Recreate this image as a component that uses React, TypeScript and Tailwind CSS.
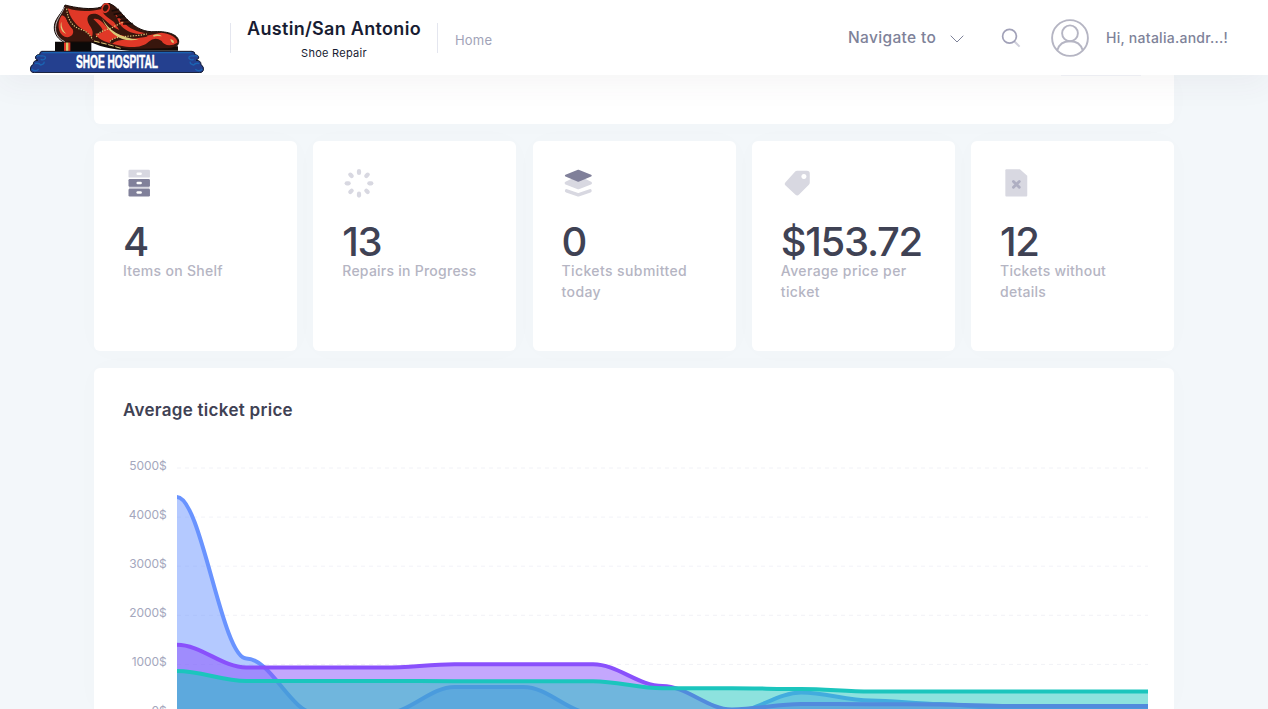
import React from 'react';

const Cabinet = () => (
  <svg viewBox="0 0 24 24" className="size-9">
    <rect x="5" y="3.2" width="14.3" height="5.2" rx="0.8" fill="#d8d8e1" />
    <rect x="5.4" y="13" width="13.6" height="3.5" fill="#d8d8e1" />
    <rect x="5" y="9.4" width="14.3" height="5.1" rx="0.8" fill="#80809a" />
    <rect x="5" y="15.8" width="14.3" height="5.2" rx="0.8" fill="#80809a" />
    {[5, 11.2, 17.5].map((y) => (
      <rect key={y} x="10.3" y={y} width="3.6" height="1.6" rx="0.8" fill="#fff" />
    ))}
  </svg>
);

const Loading = () => (
  <svg viewBox="0 0 24 24" className="ml-px size-9" fill="#d8d8e1">
    {[0, 45, 90, 135, 180, 225, 270, 315].map((a) => (
      <rect key={a} x="10.6" y="2.6" width="2.8" height="4.1" rx="1.4" transform={`rotate(${a} 12 12.2)`} />
    ))}
  </svg>
);

const Layers = () => (
  <svg viewBox="0 0 24 24" className="size-9">
    <g fill="#d8d8e1" stroke="#d8d8e1" strokeLinejoin="round" strokeLinecap="round">
      <path d="M4.1 12 12.2 15.2 20.3 12 12.2 8z" strokeWidth="2" />
      <path d="M4.4 17.2 12.2 19.9 20 17.2" fill="none" strokeWidth="2.3" />
    </g>
    <path d="M3.9 7.1 12.2 3.8 20.5 7.1 12.2 10.5z" fill="#80809a" stroke="#80809a" strokeWidth="1.3" strokeLinejoin="round" />
  </svg>
);

const Tag = () => (
  <svg viewBox="0 0 24 24" className="size-9">
    <path
      fillRule="evenodd"
      fill="#d8d8e1"
      d="M12 3.8H18.6Q20.5 3.8 20.5 5.6V11.8Q20.5 12.6 19.9 13.2L13.4 19.7Q12.2 20.9 11 19.8L4.2 13.5Q3.3 12.6 4.2 11.6L10.8 4.4Q11.3 3.8 12 3.8zM16.6 6a1.7 1.7 0 1 0 .01 0z"
    />
  </svg>
);

const FileX = () => (
  <svg viewBox="0 0 24 24" className="size-9">
    <path d="M5.5 2.9H14.6L19.5 7.1V20.4Q19.5 21 18.9 21H5.5Q4.9 21 4.9 20.4V3.5Q4.9 2.9 5.5 2.9z" fill="#d8d8e1" />
    <path d="M10.3 11 14.2 14.9M14.2 11 10.3 14.9" stroke="#afafc2" strokeWidth="1.9" strokeLinecap="round" />
  </svg>
);

const Logo = () => (
  <svg viewBox="30 8 522 210" className="h-[70px] w-[174px]">
    <path d="M105 124H214V153H105z" fill="#0c0a09" />
    <path d="M132 124H151V153H132z" fill="#df3526" />
    <path d="M138 124H145V153H138z" fill="#d9c56b" />
    <path d="M212 120 300 138 474 138V151H330Q260 148 212 126z" fill="#120c08" />
    <path
      d="M135 14C165 22 215 30 244 20C250 6 266 6 273 12C290 18 305 42 326 62C350 84 374 96 405 94C445 92 478 104 476 126Q474 144 442 145L330 147C286 145 250 128 214 125H132C100 110 98 78 109 58C119 40 130 32 135 14Z"
      fill="#38160d"
      stroke="#160b07"
      strokeWidth="3"
    />
    <path d="M133 20C124 46 103 60 107 92Q111 113 134 124" fill="none" stroke="#b9b9bd" strokeWidth="3" />
    <path d="M126 45C142 48 140 70 158 87C166 107 142 118 127 105C111 90 113 59 126 45Z" fill="#e03827" />
    <path d="M143 24C172 35 214 34 246 26C246 43 266 53 282 65L298 89C270 80 254 52 232 42C207 36 194 50 208 74C222 92 219 106 213 112C194 85 157 79 143 24Z" fill="#e03827" />
    <path d="M220 56C246 49 255 86 286 99C307 110 340 111 376 107L424 97C451 100 474 112 472 127C454 139 431 136 425 122Q405 108 386 124C369 142 332 143 302 136C265 128 235 119 226 100C253 99 260 93 220 56Z" fill="#e03827" />
    <path d="M284 39 310 66C329 86 350 93 376 99C342 106 313 91 300 72Z" fill="#e03827" />
    <ellipse cx="257" cy="23" rx="10" ry="13" transform="rotate(25 257 23)" fill="#38160d" stroke="#e03827" strokeWidth="5" />
    <path d="M275 32 296 27M281 42 304 38M290 52 314 48M300 62 324 59M309 71 338 70" stroke="#190c08" strokeWidth="5" />
    <path d="M138 24C141 67 162 88 189 93Q205 102 216 120M272 128C288 108 333 115 381 104" fill="none" stroke="#38160d" strokeWidth="10" />
    <g fill="none" stroke="#dbca79" strokeWidth="3.5" strokeDasharray="4 4">
      <path d="M140 25C143 65 164 84 189 89Q207 98 218 118" />
      <path d="M229 110C238 88 264 91 287 76L312 64" />
      <path d="M270 123C286 104 333 111 381 101" />
    </g>
    <path d="M246 53C264 88 302 115 356 117C308 130 264 100 246 53Z" fill="#dbca79" />
    <path d="M124 64Q124 88 139 100Q126 98 122 81Q121 70 124 64ZM399 105Q415 97 426 108Q410 105 401 109ZM451 116Q464 119 461 129Q453 127 451 116Z" fill="#dbca79" />
    <path d="M222 122 262 132 306 145" fill="none" stroke="#dbca79" strokeWidth="3" strokeDasharray="17 5" />
    <path
      d="M65 153H516Q526 154 525 163Q537 164 536 173Q532 179 528 180Q543 180 543 192Q553 201 550 210Q548 217 538 217H43Q31 217 31 206Q31 196 40 192Q39 180 54 180Q43 176 47 168Q50 162 59 163Q58 155 65 153Z"
      fill="#24408f"
      stroke="#11182e"
      strokeWidth="3"
    />
    <path
      d="M67 157H514M50 168Q56 164 62 167M62 167Q78 165 76 174Q71 181 62 177M45 190Q56 186 62 194Q74 192 72 184M35 206Q46 216 56 207M533 168Q527 164 521 167Q505 165 507 174Q512 181 521 177M538 190Q527 186 521 194Q509 192 511 184M547 206Q536 216 526 207"
      fill="none"
      stroke="#1b63b2"
      strokeWidth="4"
    />
    <text x="168" y="204" textLength="246" lengthAdjust="spacingAndGlyphs" fill="#fff" stroke="#fff" strokeWidth="1.5" fontFamily="Liberation Sans, sans-serif" fontSize="53" fontWeight="700">
      SHOE HOSPITAL
    </text>
  </svg>
);

const stats = [
  { icon: Cabinet, value: '4', label: 'Items on Shelf', tracking: 'tracking-[0.3px]' },
  { icon: Loading, value: '13', label: 'Repairs in Progress', tracking: 'tracking-[0.25px]' },
  { icon: Layers, value: '0', label: 'Tickets submitted today', tracking: 'tracking-[0.4px]' },
  { icon: Tag, value: '$153.72', label: 'Average price per ticket', tracking: 'tracking-[0.4px]' },
  { icon: FileX, value: '12', label: 'Tickets without details', tracking: 'tracking-[0.25px]' },
];

const STEP = 971 / 14;
const BOTTOM = 265;

function curve(ys: number[]) {
  return ys
    .map((y, i) => {
      const x = 56 + i * STEP;
      if (i === 0) return `M${x} ${y}`;
      const k = STEP * 0.35;
      return `C${x - STEP + k} ${ys[i - 1]} ${x - k} ${y} ${x} ${y}`;
    })
    .join('');
}

const series = [
  { color: '#6993ff', ys: [49, 210.5, 265.5, 265.5, 239, 239, 265.5, 265.5, 264, 244.5, 252.5, 256, 261, 262, 262] },
  { color: '#8950fc', ys: [196.8, 219.5, 219.5, 219.5, 216.3, 216.3, 216.3, 238, 261.5, 256, 256.2, 256.5, 258, 258, 258] },
  { color: '#1bc5bd', ys: [223, 233, 233, 233, 233.2, 233.2, 233.2, 240.3, 240.3, 241, 243.5, 243.5, 243.5, 243.5, 243.5] },
];

const Chart = () => (
  <svg width="1040" height="261" viewBox="0 0 1040 261" className="block">
    <defs>
      <clipPath id="plot">
        <rect x="56" y="0" width="971" height="261" />
      </clipPath>
    </defs>
    {[5000, 4000, 3000, 2000, 1000, 0].map((v, i) => (
      <g key={v}>
        <line x1="56" x2="1027" y1={20 + i * 49.1} y2={20 + i * 49.1} stroke="#ebedf3" strokeOpacity="0.7" strokeDasharray="4 4" />
        <text x="45.5" y={22.4 + i * 49} textAnchor="end" fontSize="12" fill="#a4a7bd" className="tracking-[-0.1px]">
          {v}$
        </text>
      </g>
    ))}
    <g clipPath="url(#plot)">
      {series.map((s) => (
        <g key={s.color}>
          <path d={`${curve(s.ys)}V${BOTTOM}H56Z`} fill={s.color} fillOpacity="0.5" />
          <path d={curve(s.ys)} fill="none" stroke={s.color} strokeWidth="4" />
        </g>
      ))}
    </g>
  </svg>
);

const Header = () => (
  <header className="relative z-10 flex h-[75px] shrink-0 items-start bg-white pl-[30px] shadow-[0_10px_30px_0_rgba(82,63,85,0.05)]">
    <div className="pt-[3px]">
      <Logo />
    </div>
    <div className="mt-[23px] ml-[26px] h-[30px] w-px bg-[#e4e6ef]" />
    <div className="flex w-[206px] flex-col items-center pt-[18px] whitespace-nowrap text-[#181c32]">
      <div className="text-[18px] leading-[22px] font-semibold tracking-[0.3px]">Austin/San Antonio</div>
      <div className="mt-[5px] text-[11px] leading-4 tracking-[0.27px]">Shoe Repair</div>
    </div>
    <div className="mt-[23px] h-[30px] w-px bg-[#e4e6ef]" />
    <a className="mt-[30px] ml-[17px] text-[13px] leading-5 tracking-[0.2px] text-[#a1a3b8]">Home</a>
    <div className="ml-auto flex h-[75px] items-center pr-10 font-medium text-[#7e8299]">
      <span className="w-[88px] text-[15.5px] leading-5 tracking-[0.35px] whitespace-nowrap">Navigate to</span>
      <svg width="14" height="8" viewBox="0 0 14 8" className="mt-[2px] ml-[14px]" fill="none" stroke="#7e8299">
        <path d="M.7.7 7 7 13.3.7" />
      </svg>
      <svg width="20" height="20" viewBox="0 0 20 20" className="ml-[37px]" fill="none">
        <path d="M13.2 13.2 18.6 18.6" stroke="#cfcfdb" strokeWidth="2" />
        <circle cx="8.5" cy="8.2" r="6.9" stroke="#a1a1b8" strokeWidth="1.7" />
      </svg>
      <svg width="38" height="38" viewBox="0 0 38 38" className="ml-[30px]" fill="none" stroke="#b5b5c3" strokeWidth="1.9">
        <circle cx="19" cy="19" r="17.9" />
        <circle cx="19" cy="14.3" r="7.9" />
        <path d="M6.4 31C8.2 25 13 22.2 19 22.2S29.8 25 31.6 31" />
      </svg>
      <span className="ml-[17px] w-[122px] text-[14px] leading-5 tracking-[0.27px] whitespace-nowrap">Hi, natalia.andr...!</span>
    </div>
  </header>
);

export default function App() {
  return (
    <div className="flex h-[709px] w-[1268px] flex-col overflow-hidden bg-[#f3f7fa] font-['Inter','Noto_Sans',sans-serif]">
      <Header />
      <main className="mx-auto flex w-[1080px] flex-col">
        <section className="flex h-[49px] justify-end rounded-b-md bg-white pr-[33px] shadow-[0_0_30px_0_rgba(82,63,105,0.015)]">
          <div className="h-px w-20 bg-[#f3f4f9]" />
        </section>
        <section className="mt-[17px] grid grid-cols-5 gap-x-[16.25px]">
          {stats.map(({ icon: Icon, value, label, tracking }) => (
            <article key={label} className="h-[210px] rounded-md bg-white pt-6 pr-4 pl-[29px] shadow-[0_0_30px_0_rgba(82,63,105,0.015)]">
              <div className="-ml-0.5">
                <Icon />
              </div>
              <div className="mt-[19px] text-[40px] leading-[44px] font-medium tracking-[-1.3px] text-[#3f4254]">{value}</div>
              <div className={`mt-[-4px] w-[142px] text-[14px] leading-[21px] font-medium text-[#b5b5c3] ${tracking}`}>{label}</div>
            </article>
          ))}
        </section>
        <section className="mt-[17px] h-[341px] rounded-t-md bg-white pl-[27px] shadow-[0_0_30px_0_rgba(82,63,105,0.015)]">
          <h2 className="h-20 pt-[30px] pl-0.5 text-[17px] leading-6 font-semibold tracking-[0.29px] text-[#3f4254]">Average ticket price</h2>
          <Chart />
        </section>
      </main>
    </div>
  );
}
